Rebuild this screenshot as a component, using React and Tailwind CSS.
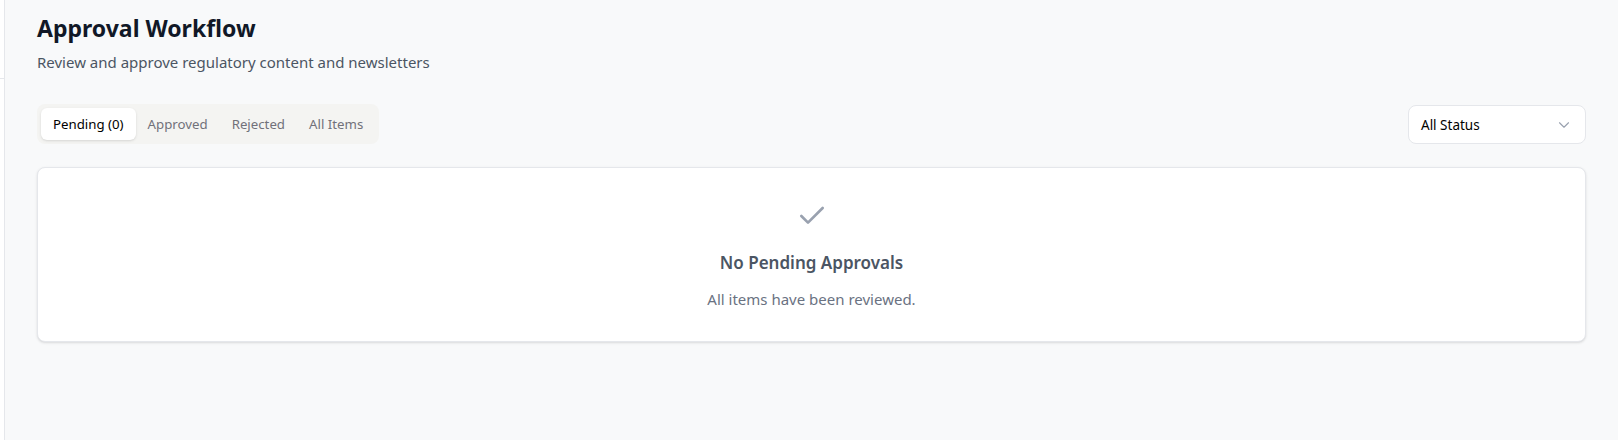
import React from "react";
import { Check, ChevronDown } from "lucide-react";

const tabs = ["Pending (0)", "Approved", "Rejected", "All Items"];

export default function App() {
  return (
    <div
      className="flex h-[440px] w-full bg-[#f8f9fa] overflow-hidden"
      style={{ fontFamily: '"Segoe UI", "Noto Sans", "Open Sans", sans-serif' }}
    >
      <div className="w-[5px] shrink-0 bg-white border-r border-gray-200 flex flex-col">
        <div className="h-[79px] border-b border-gray-200" />
      </div>

      <main className="flex-1 px-8 pt-3">
        <h1 className="text-[23px] font-bold text-[#111827] leading-8">Approval Workflow</h1>
        <p className="mt-2 text-[15px] leading-5 text-[#4b5563]">
          Review and approve regulatory content and newsletters
        </p>

        <div className="mt-[32px] flex items-center justify-between">
          <div className="flex items-center rounded-lg bg-[#f4f4f2] p-1">
            {tabs.map((t, i) => (
              <button
                key={t}
                className={
                  i === 0
                    ? "h-8 rounded-md bg-white px-3 pt-[2px] text-[13.25px] text-black shadow-sm"
                    : "h-8 rounded-md px-3 pt-[2px] text-[13.25px] text-[#71717a]"
                }
              >
                {t}
              </button>
            ))}
          </div>

          <button className="flex h-[39px] w-[178px] items-center justify-between rounded-lg border border-gray-200 bg-white pl-3 pr-3 pt-[2px] text-[13.5px] text-black">
            <span>All Status</span>
            <ChevronDown className="h-[18px] w-[18px] text-gray-400" strokeWidth={1.5} />
          </button>
        </div>

        <div className="mt-[23px] flex flex-col items-center rounded-lg border border-gray-200 bg-white px-8 pb-[32px] pt-8 shadow-sm">
          <Check className="h-8 w-8 text-gray-400" strokeWidth={2} />
          <h3 className="mt-[17px] text-[17px] leading-7 font-semibold text-[#4b5563]">No Pending Approvals</h3>
          <p className="mt-3 text-[15px] leading-5 text-gray-500">All items have been reviewed.</p>
        </div>
      </main>
    </div>
  );
}
